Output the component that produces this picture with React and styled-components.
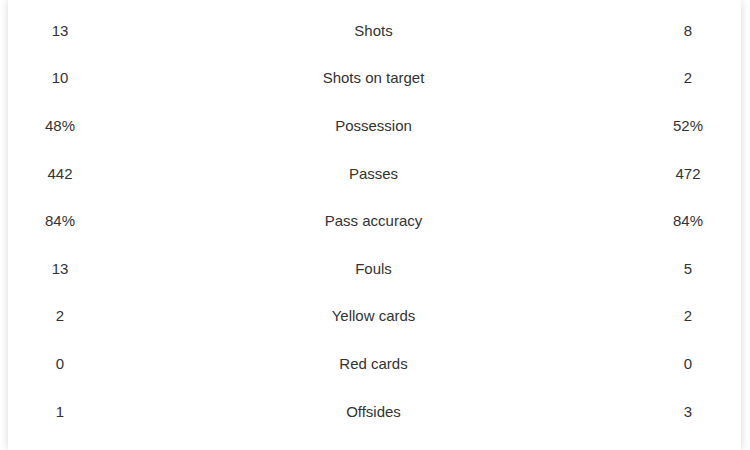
import React from "react";
import styled, { createGlobalStyle } from "styled-components";

const Global = createGlobalStyle`
  html, body { margin: 0; padding: 0; background: #fff; }
  body { font-family: "Liberation Sans", Arial, sans-serif; overflow: hidden; }
`;

const Page = styled.div`
  padding: 0 9px 0 8px;
  height: 450px;
  box-sizing: border-box;
`;

const Card = styled.div`
  background: #fff;
  box-shadow: 0 0 8px rgba(0, 0, 0, 0.16);
  padding-top: 7px;
  height: 450px;
  box-sizing: border-box;
`;

const Row = styled.div`
  display: grid;
  grid-template-columns: 104px 1fr 106px;
  align-items: center;
  height: 47.6px;
`;

const Cell = styled.div`
  text-align: center;
  font-size: 15px;
  color: #333;
  line-height: 18px;
`;

const stats = [
  ["13", "Shots", "8"],
  ["10", "Shots on target", "2"],
  ["48%", "Possession", "52%"],
  ["442", "Passes", "472"],
  ["84%", "Pass accuracy", "84%"],
  ["13", "Fouls", "5"],
  ["2", "Yellow cards", "2"],
  ["0", "Red cards", "0"],
  ["1", "Offsides", "3"],
];

export default function App() {
  return (
    <>
      <Global />
      <Page>
        <Card>
          {stats.map(([h, label, a]) => (
            <Row key={label}>
              <Cell>{h}</Cell>
              <Cell>{label}</Cell>
              <Cell>{a}</Cell>
            </Row>
          ))}
        </Card>
      </Page>
    </>
  );
}
